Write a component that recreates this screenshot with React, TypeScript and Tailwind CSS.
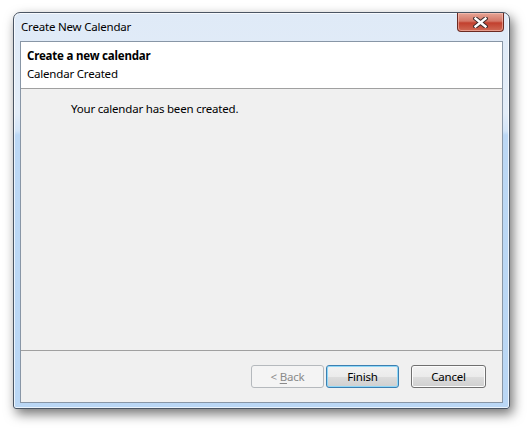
import React from "react";

const font = {
  fontFamily: '"Noto Sans", "Open Sans", "Liberation Sans", sans-serif',
};

function Btn({
  children,
  kind,
  w,
}: {
  children: React.ReactNode;
  kind: "disabled" | "default" | "normal";
  w: string;
}) {
  const base =
    "h-[23px] rounded-[3px] border text-[11.5px] tracking-[-0.2px] flex items-center justify-center leading-none";
  if (kind === "disabled")
    return (
      <div className={`${base} ${w} border-[#b5b9bd] bg-[#f4f4f4] text-[#8a8a8a]`}>{children}</div>
    );
  if (kind === "default")
    return (
      <div
        className={`${base} ${w} border-[#3c7fb1] text-black shadow-[inset_0_0_0_1px_#8fd8f8] bg-[linear-gradient(to_bottom,#f2f2f2_0%,#ebebeb_50%,#dddddd_51%,#cfcfcf_100%)]`}
      >
        {children}
      </div>
    );
  return (
    <div
      className={`${base} ${w} border-[#707070] text-black shadow-[inset_0_0_0_1px_#fcfcfc] bg-[linear-gradient(to_bottom,#f2f2f2_0%,#ebebeb_50%,#dddddd_51%,#cfcfcf_100%)]`}
    >
      {children}
    </div>
  );
}

export default function App() {
  return (
    <div className="w-[528px] h-[429px] bg-white overflow-hidden" style={font}>
      <div className="pt-[12px] pl-[13px]">
        <div className="w-[497px] h-[397px] flex flex-col border border-[#4a5563] rounded-t-[7px] rounded-b-[3px] bg-[linear-gradient(to_bottom,#dfeaf7_0px,#e3edf8_100px,#d3e5f8_118px,#bcd8f5_122px,#bad7f5_100%)] shadow-[3px_5px_12px_rgba(0,0,0,0.55),inset_0_0_0_1px_rgba(255,255,255,0.7)]">
          {/* title bar */}
          <div className="h-[28px] flex items-start justify-between">
            <div className="pl-[7px] pt-[5px] text-[11.5px] tracking-[-0.2px] text-black">
              Create New Calendar
            </div>
            <div className="mr-[5px] w-[47px] h-[19px] rounded-b-[4px] border border-t-0 border-[#6b2a22] bg-[linear-gradient(to_bottom,#e6a596_0%,#d47767_45%,#c2402e_55%,#cf6a55_100%)] shadow-[inset_0_0_0_1px_rgba(255,210,200,0.5)] flex items-center justify-center">
              <svg width="15" height="11" viewBox="0 0 15 11">
                <path
                  d="M2.5 1.5 L12.5 9.5 M12.5 1.5 L2.5 9.5"
                  stroke="#3a2a2a"
                  strokeWidth="4.4"
                  strokeLinecap="square"
                />
                <path
                  d="M2.5 1.5 L12.5 9.5 M12.5 1.5 L2.5 9.5"
                  stroke="#ffffff"
                  strokeWidth="2.4"
                  strokeLinecap="square"
                />
              </svg>
            </div>
          </div>
          {/* client */}
          <div className="mx-[6px] mb-[5px] flex-1 flex flex-col border border-[#8896a6] bg-[#f0f0f0]">
            <div className="h-[47px] bg-white border-b border-[#a0a0a0] pl-[6px] pt-[5px] text-[11.5px] tracking-[-0.2px] text-black leading-[18px]">
              <div className="font-bold">Create a new calendar</div>
              <div>Calendar Created</div>
            </div>
            <div className="flex-1 pl-[50px] pt-[11px] text-[11.5px] tracking-[-0.2px] text-black">
              Your calendar has been created.
            </div>
            <div className="h-[52px] border-t border-[#a0a0a0] flex items-start justify-end pt-[14px] pr-[16px]">
              <Btn kind="disabled" w="w-[73px]">
                &lt;&nbsp;<span className="underline underline-offset-2">B</span>ack
              </Btn>
              <div className="w-[2px]" />
              <Btn kind="default" w="w-[73px]">
                Finish
              </Btn>
              <div className="w-[12px]" />
              <Btn kind="normal" w="w-[75px]">
                Cancel
              </Btn>
            </div>
          </div>
        </div>
      </div>
    </div>
  );
}
